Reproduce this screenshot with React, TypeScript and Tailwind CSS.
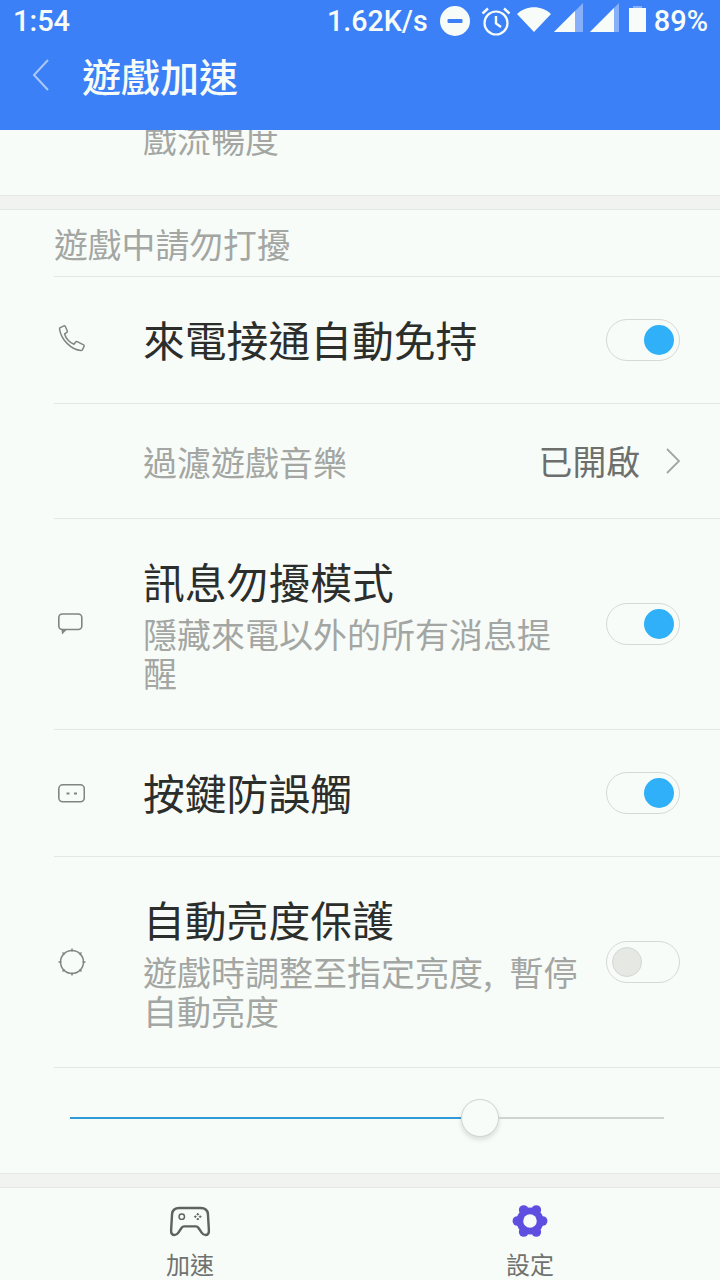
const CJK = { fontFamily: '"Noto Sans CJK TC", "Noto Sans CJK SC", sans-serif' };

function Toggle({ on }: { on: boolean }) {
  return (
    <div className={`flex h-[42px] w-[74px] shrink-0 items-center rounded-full border border-[#d6d9d5] px-[5px] ${on ? "justify-end" : "justify-start"}`}>
      <div className={`h-[30px] w-[30px] rounded-full ${on ? "bg-[#2fb0f8]" : "border border-[#d3d6d2] bg-[#e6e8e4]"}`} />
    </div>
  );
}

const iconStroke = "#808580";

function Phone() {
  return (
    <svg width="37" height="37" viewBox="0 0 30 30" fill="none" stroke={iconStroke} strokeWidth="1.200" strokeLinejoin="round">
      <path d="M5.2 4.5 8 3.2c.6-.2 1 0 1.2.5l1.6 3.6c.2.5 0 .9-.4 1.2L8.6 9.700c.8 3.400 4.400 7.200 7.600 8.300l1.400-1.800c.3-.4.8-.5 1.200-.3l5.200 2.700c.5.3.6.7.4 1.200l-1.300 2.600c-.3.500-.7.800-1.300.700C14.300 22.700 5.800 14.500 4.500 5.700c-.1-.5.200-1 .7-1.200Z" />
    </svg>
  );
}

function Bubble() {
  return (
    <svg className="ml-[1px]" width="30" height="30" viewBox="0 0 30 30" fill="none">
      <rect x="3.800" y="5" width="23" height="15.500" rx="3.500" stroke={iconStroke} strokeWidth="1.600" />
      <path d="M6.500 20 12 20.500 7 25.500Z" fill={iconStroke} />
    </svg>
  );
}

function KeyIcon() {
  return (
    <svg className="ml-[1px]" width="30" height="30" viewBox="0 0 30 30" fill="none">
      <rect x="3.800" y="6.800" width="25.500" height="17" rx="4" stroke={iconStroke} strokeWidth="1.600" />
      <path d="M11.500 15.500h3M19 15.500h3" stroke={iconStroke} strokeWidth="1.800" />
    </svg>
  );
}

function Sun() {
  return (
    <svg className="ml-[2.500px]" width="30" height="30" viewBox="0 0 30 30" fill="none" stroke={iconStroke}>
      <circle cx="15" cy="15" r="11.500" strokeWidth="1.500" />
      <path d="M15 1.500v3M15 25.500v3M1.500 15h3M25.500 15h3M5.500 5.500l2 2M22.500 22.500l2 2M5.500 24.500l2-2M22.500 7.500l2-2" strokeWidth="1.500" />
    </svg>
  );
}

function Row({ icon, title, sub, right, h, last }: { icon?: React.ReactNode; title?: string; sub?: string[]; right?: React.ReactNode; h: string; last?: boolean }) {
  return (
    <div className={`flex items-center ${h} ${last ? "" : "border-b border-[#e4e7e3]"}`}>
      <div className="flex w-[89px] shrink-0 items-center">{icon}</div>
      <div className="min-w-0 flex-1">
        {title && <div className={`text-[41.800px] leading-[50px] text-[#2c2e2c] ${sub ? "mb-[8px]" : "pb-[3px]"}`}>{title}</div>}
        {sub && sub.map((s) => (
          <div key={s} className="text-[34px] leading-[39px] text-[#a3a6a3]">{s}</div>
        ))}
      </div>
      {right && <div className="flex shrink-0 items-center pr-[40px]">{right}</div>}
    </div>
  );
}

export default function App() {
  return (
    <div style={CJK} className="flex h-[1280px] w-[720px] flex-col overflow-hidden bg-[#f8fcf8]">
      <header className="h-[130px] shrink-0 bg-[#3b80f7] text-[#f8fcf8]">
        <div className="flex h-[42px] items-center justify-between pl-[13px] pr-[12px]" style={{ fontFamily: "Roboto, sans-serif" }}>
          <span className="text-[29px] font-medium leading-none">1:54</span>
          <div className="flex items-center">
            <span className="text-[28.600px] font-medium leading-none">1.62K/s</span>
            <svg className="ml-[12px]" width="30" height="30" viewBox="0 0 30 30">
              <circle cx="15" cy="15" r="15" fill="#f8fcf8" />
              <rect x="7.500" y="13" width="15" height="4" rx="1" fill="#3b80f7" />
            </svg>
            <svg className="ml-[10px]" width="32" height="32" viewBox="0 0 32 32" fill="none" stroke="#f8fcf8">
              <circle cx="16" cy="18" r="11.500" strokeWidth="2.200" />
              <path d="M16 11v7.500l5 3.500M2.500 8.500 8 3.500M29.500 8.500 24 3.500" strokeWidth="2.400" />
            </svg>
            <svg className="mb-[4px] ml-[4px]" width="36" height="25" viewBox="0 0 36 25">
              <path d="M1 7C10 -2 26 -2 35 7L18 25Z" fill="#f8fcf8" />
            </svg>
            <svg className="mb-[6px] ml-[2px]" width="30" height="30" viewBox="0 0 30 30">
              <path d="M0 29 29 0V29Z" fill="#86b0fa" />
              <path d="M0 29 21 8V29Z" fill="#f8fcf8" />
            </svg>
            <svg className="mb-[6px] ml-[6px]" width="30" height="30" viewBox="0 0 30 30">
              <path d="M0 29 29 0V29Z" fill="#86b0fa" />
              <path d="M0 29 24 5V29Z" fill="#f8fcf8" />
            </svg>
            <svg className="mb-[4px] ml-[9px]" width="17" height="26" viewBox="0 0 17 26">
              <path d="M4 0h9v2h4v24H0V2h4Z" fill="#86b0fa" />
              <path d="M0 2h17v24H0Z" fill="#f8fcf8" />
            </svg>
            <span className="ml-[8px] text-[29px] font-medium leading-none">89%</span>
          </div>
        </div>
        <div className="flex h-[72px] items-center pb-[6px]">
          <svg className="ml-[31px]" width="20" height="34" viewBox="0 0 20 34" fill="none" stroke="#a9c8fb" strokeWidth="2">
            <path d="M17 2 3 17l14 15" />
          </svg>
          <h1 className="ml-[31px] text-[39px] font-medium leading-none">遊戲加速</h1>
        </div>
      </header>

      <div className="h-[66px] shrink-0 overflow-hidden border-b border-[#e4e7e3] pl-[143px]">
        <div className="-mt-[16px] text-[34px] leading-[50px] text-[#a3a6a3]">戲流暢度</div>
      </div>
      <div className="h-[14px] shrink-0 border-b border-[#e4e7e3] bg-[#f0f3ef]" />

      <div className="flex-1 pl-[54px]">
        <div className="flex h-[67px] items-center border-b border-[#e4e7e3] pt-[2px] text-[33.800px] text-[#a3a6a3]">遊戲中請勿打擾</div>
        <Row h="h-[127px]" icon={<Phone />} title="來電接通自動免持" right={<Toggle on />} />
        <Row
          h="h-[115px]"
          sub={["過濾遊戲音樂"]}
          right={
            <div className="-mr-[2px] flex items-center">
              <span className="text-[33.800px] leading-none text-[#6c6f6c]">已開啟</span>
              <svg className="ml-[24px]" width="18" height="28" viewBox="0 0 18 28" fill="none" stroke="#a3a6a3" strokeWidth="1.800">
                <path d="M3 2l12 12L3 26" />
              </svg>
            </div>
          }
        />
        <Row h="h-[211px]" icon={<Bubble />} title="訊息勿擾模式" sub={["隱藏來電以外的所有消息提", "醒"]} right={<Toggle on />} />
        <Row h="h-[127px]" icon={<KeyIcon />} title="按鍵防誤觸" right={<Toggle on />} />
        <Row h="h-[211px]" icon={<Sun />} title="自動亮度保護" sub={["遊戲時調整至指定亮度,\u2002暫停", "自動亮度"]} right={<Toggle on={false} />} />
        <div className="flex h-[105px] items-center pb-[6px] pl-[16px] pr-[56px]">
          <div className="h-[2px] w-[391px] bg-[#2f9bd9]" />
          <div className="h-[38px] w-[38px] shrink-0 rounded-full border border-[#d0d3cf] bg-[#f8fcf8] shadow-[0_3px_5px_rgba(0,0,0,0.12)]" />
          <div className="h-[2px] flex-1 bg-[#d0d3cf]" />
        </div>
      </div>

      <div className="h-[15px] shrink-0 border-y border-[#e4e7e3] bg-[#f0f3ef]" />

      <nav className="flex h-[93px] shrink-0">
        <div className="flex w-[380px] flex-col items-center">
          <svg className="mt-[18px]" width="42" height="32" viewBox="0 0 42 32" fill="none" stroke="#5f635f" strokeWidth="2.500" strokeLinejoin="round">
            <path d="M10 2h22c4 0 7 2 7.500 6l1 17c.2 3-1 5-3.500 5-2 0-3-1-4-2.500L30 23c-1-1.500-1.500-2-3-2H15c-1.500 0-2 .5-3 2l-3 4.500C8 29 7 30 5 30c-2.500 0-3.700-2-3.500-5l1-17C3 4 6 2 10 2Z" />
            <circle cx="12.500" cy="11" r="2.800" strokeWidth="1.500" />
            <path d="M29 7.500l1 1-1 1-1-1zM29 12.500l1 1-1 1-1-1zM26.500 10l1 1-1 1-1-1zM31.500 10l1 1-1 1-1-1z" strokeWidth="1" fill="#5f635f" />
          </svg>
          <span className="mt-[10px] text-[24px] leading-[34px] text-[#6f726f]">加速</span>
        </div>
        <div className="flex w-[300px] flex-col items-center">
          <svg className="mt-[17px]" width="36" height="33" viewBox="0 0 36 33">
            <g fill="#5f4fe0">
              <circle cx="18" cy="16.500" r="14" />
              <circle cx="31" cy="16.500" r="5" />
              <circle cx="5" cy="16.500" r="5" />
              <circle cx="24.500" cy="27.800" r="5" />
              <circle cx="11.500" cy="27.800" r="5" />
              <circle cx="24.500" cy="5.200" r="5" />
              <circle cx="11.500" cy="5.200" r="5" />
            </g>
            <circle cx="18" cy="16.500" r="7" fill="#f8fcf8" />
          </svg>
          <span className="mt-[10px] text-[24px] leading-[34px] text-[#6f726f]">設定</span>
        </div>
      </nav>
    </div>
  );
}
